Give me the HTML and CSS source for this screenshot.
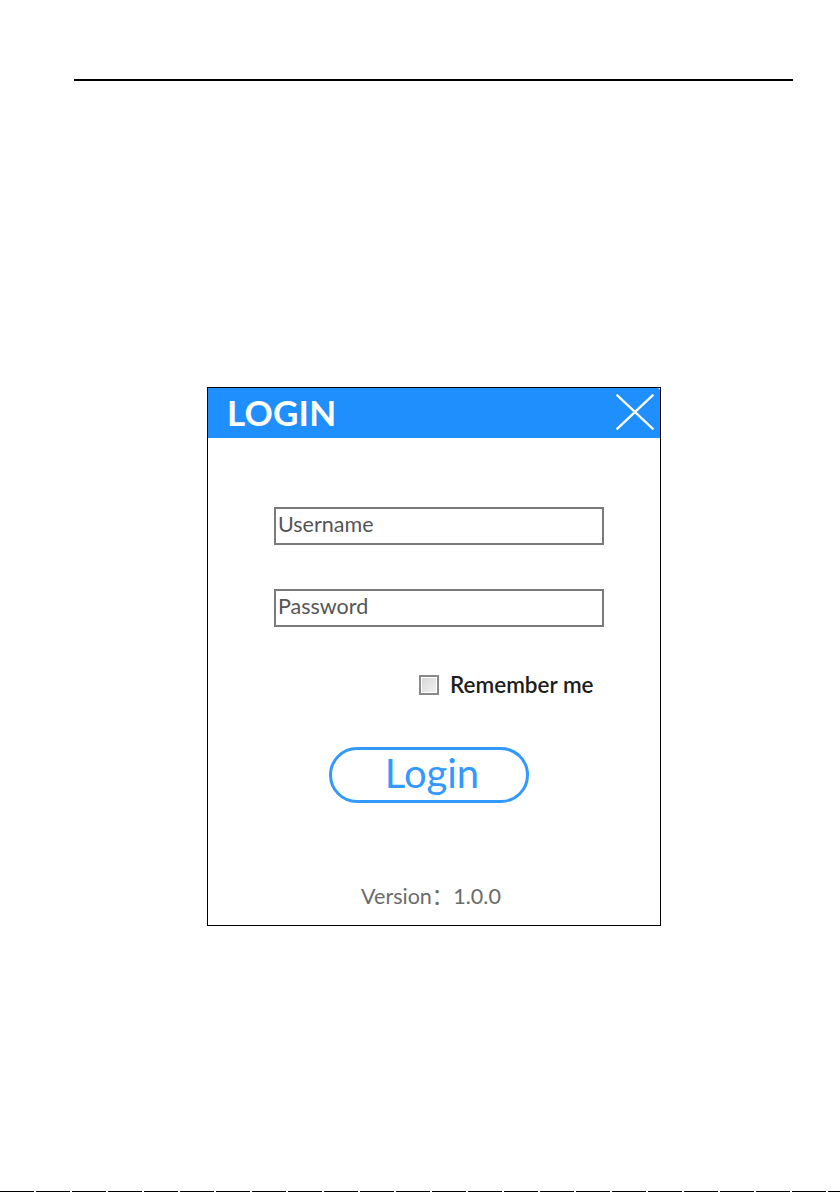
FILE: index.html
```html
<!DOCTYPE html>
<html lang="en">
<head>
<meta charset="utf-8">
<title>Login</title>
<link rel="stylesheet" href="styles.css">
</head>
<body>
<div class="page">
  <hr class="top-rule">
  <div class="dialog">
    <div class="dialog-header">
      <span class="dialog-title">LOGIN</span>
      <svg class="close-icon" width="38" height="36" viewBox="0 0 38 36" aria-hidden="true">
        <path d="M1.5 1.5 L36.5 34.5 M36.5 1.5 L1.5 34.5" stroke="#ffffff" stroke-width="2.4" stroke-linecap="square" fill="none"/>
      </svg>
    </div>
    <div class="dialog-body">
      <div class="field">Username</div>
      <div class="field field-password">Password</div>
      <label class="remember">
        <span class="checkbox"></span>
        <span class="remember-text">Remember me</span>
      </label>
      <div class="login-btn">Login</div>
      <div class="version">Version：1.0.0</div>
    </div>
  </div>
  <div class="bottom-rule"></div>
</div>
</body>
</html>
```

FILE: styles.css
```css
html, body {
  margin: 0;
  padding: 0;
  background: #ffffff;
}

body {
  font-family: Lato, "Open Sans", "Liberation Sans", "Noto Sans CJK SC", sans-serif;
  color: #222;
}

.page {
  width: 840px;
  height: 1192px;
  position: relative;
  display: flex;
  flex-direction: column;
}

.top-rule {
  margin: 79px 0 0 74px;
  width: 719px;
  height: 2px;
  border: 0;
  background: #000;
}

.dialog {
  margin: 306px 0 0 207px;
  width: 452px;
  height: 537px;
  border: 1px solid #000;
  display: flex;
  flex-direction: column;
}

.dialog-header {
  height: 50px;
  background: #1f8ffe;
  display: flex;
  align-items: center;
  justify-content: space-between;
  padding: 0 6px 0 19px;
  border-top-right-radius: 3px;
}

.dialog-title {
  color: #fff;
  font-weight: 700;
  font-size: 35px;
  letter-spacing: 0.2px;
  line-height: 1;
  margin-top: -2px;
}

.close-icon {
  display: block;
  margin-top: -2px;
}

.dialog-body {
  flex: 1;
  display: flex;
  flex-direction: column;
}

.field {
  box-sizing: border-box;
  margin: 69px 0 0 66px;
  width: 330px;
  height: 38px;
  border: 2px solid #7a7a7a;
  padding: 0 0 0 2px;
  font-size: 21.5px;
  line-height: 30px;
  color: #555;
}

.field-password {
  margin-top: 44px;
}

.remember {
  display: flex;
  align-items: center;
  margin: 48px 0 0 211px;
  height: 20px;
}

.checkbox {
  box-sizing: border-box;
  width: 20px;
  height: 20px;
  border: 2px solid #8a8a8a;
  background: linear-gradient(135deg, #d6d6d6, #f4f4f4);
  box-shadow: inset 0 0 0 1px #fff;
}

.remember-text {
  margin-left: 11px;
  font-size: 22.5px;
  font-weight: 600;
  color: #1d1d1d;
  line-height: 20px;
}

.login-btn {
  box-sizing: border-box;
  margin: 52px 0 0 121px;
  width: 200px;
  height: 56px;
  border: 3px solid #3399ff;
  border-radius: 28px;
  color: #3399ff;
  font-size: 40px;
  text-align: center;
  line-height: 46px;
  padding-left: 6px;
}

.version {
  margin: 81px 0 0 0;
  text-align: center;
  width: 446px;
  font-size: 21.5px;
  color: #6b6b6b;
  line-height: 24px;
}

.bottom-rule {
  position: absolute;
  left: 0;
  right: 0;
  bottom: 0;
  height: 1px;
  background: repeating-linear-gradient(90deg, #000 0, #000 34px, #fff 34px, #fff 36px);
}
```
